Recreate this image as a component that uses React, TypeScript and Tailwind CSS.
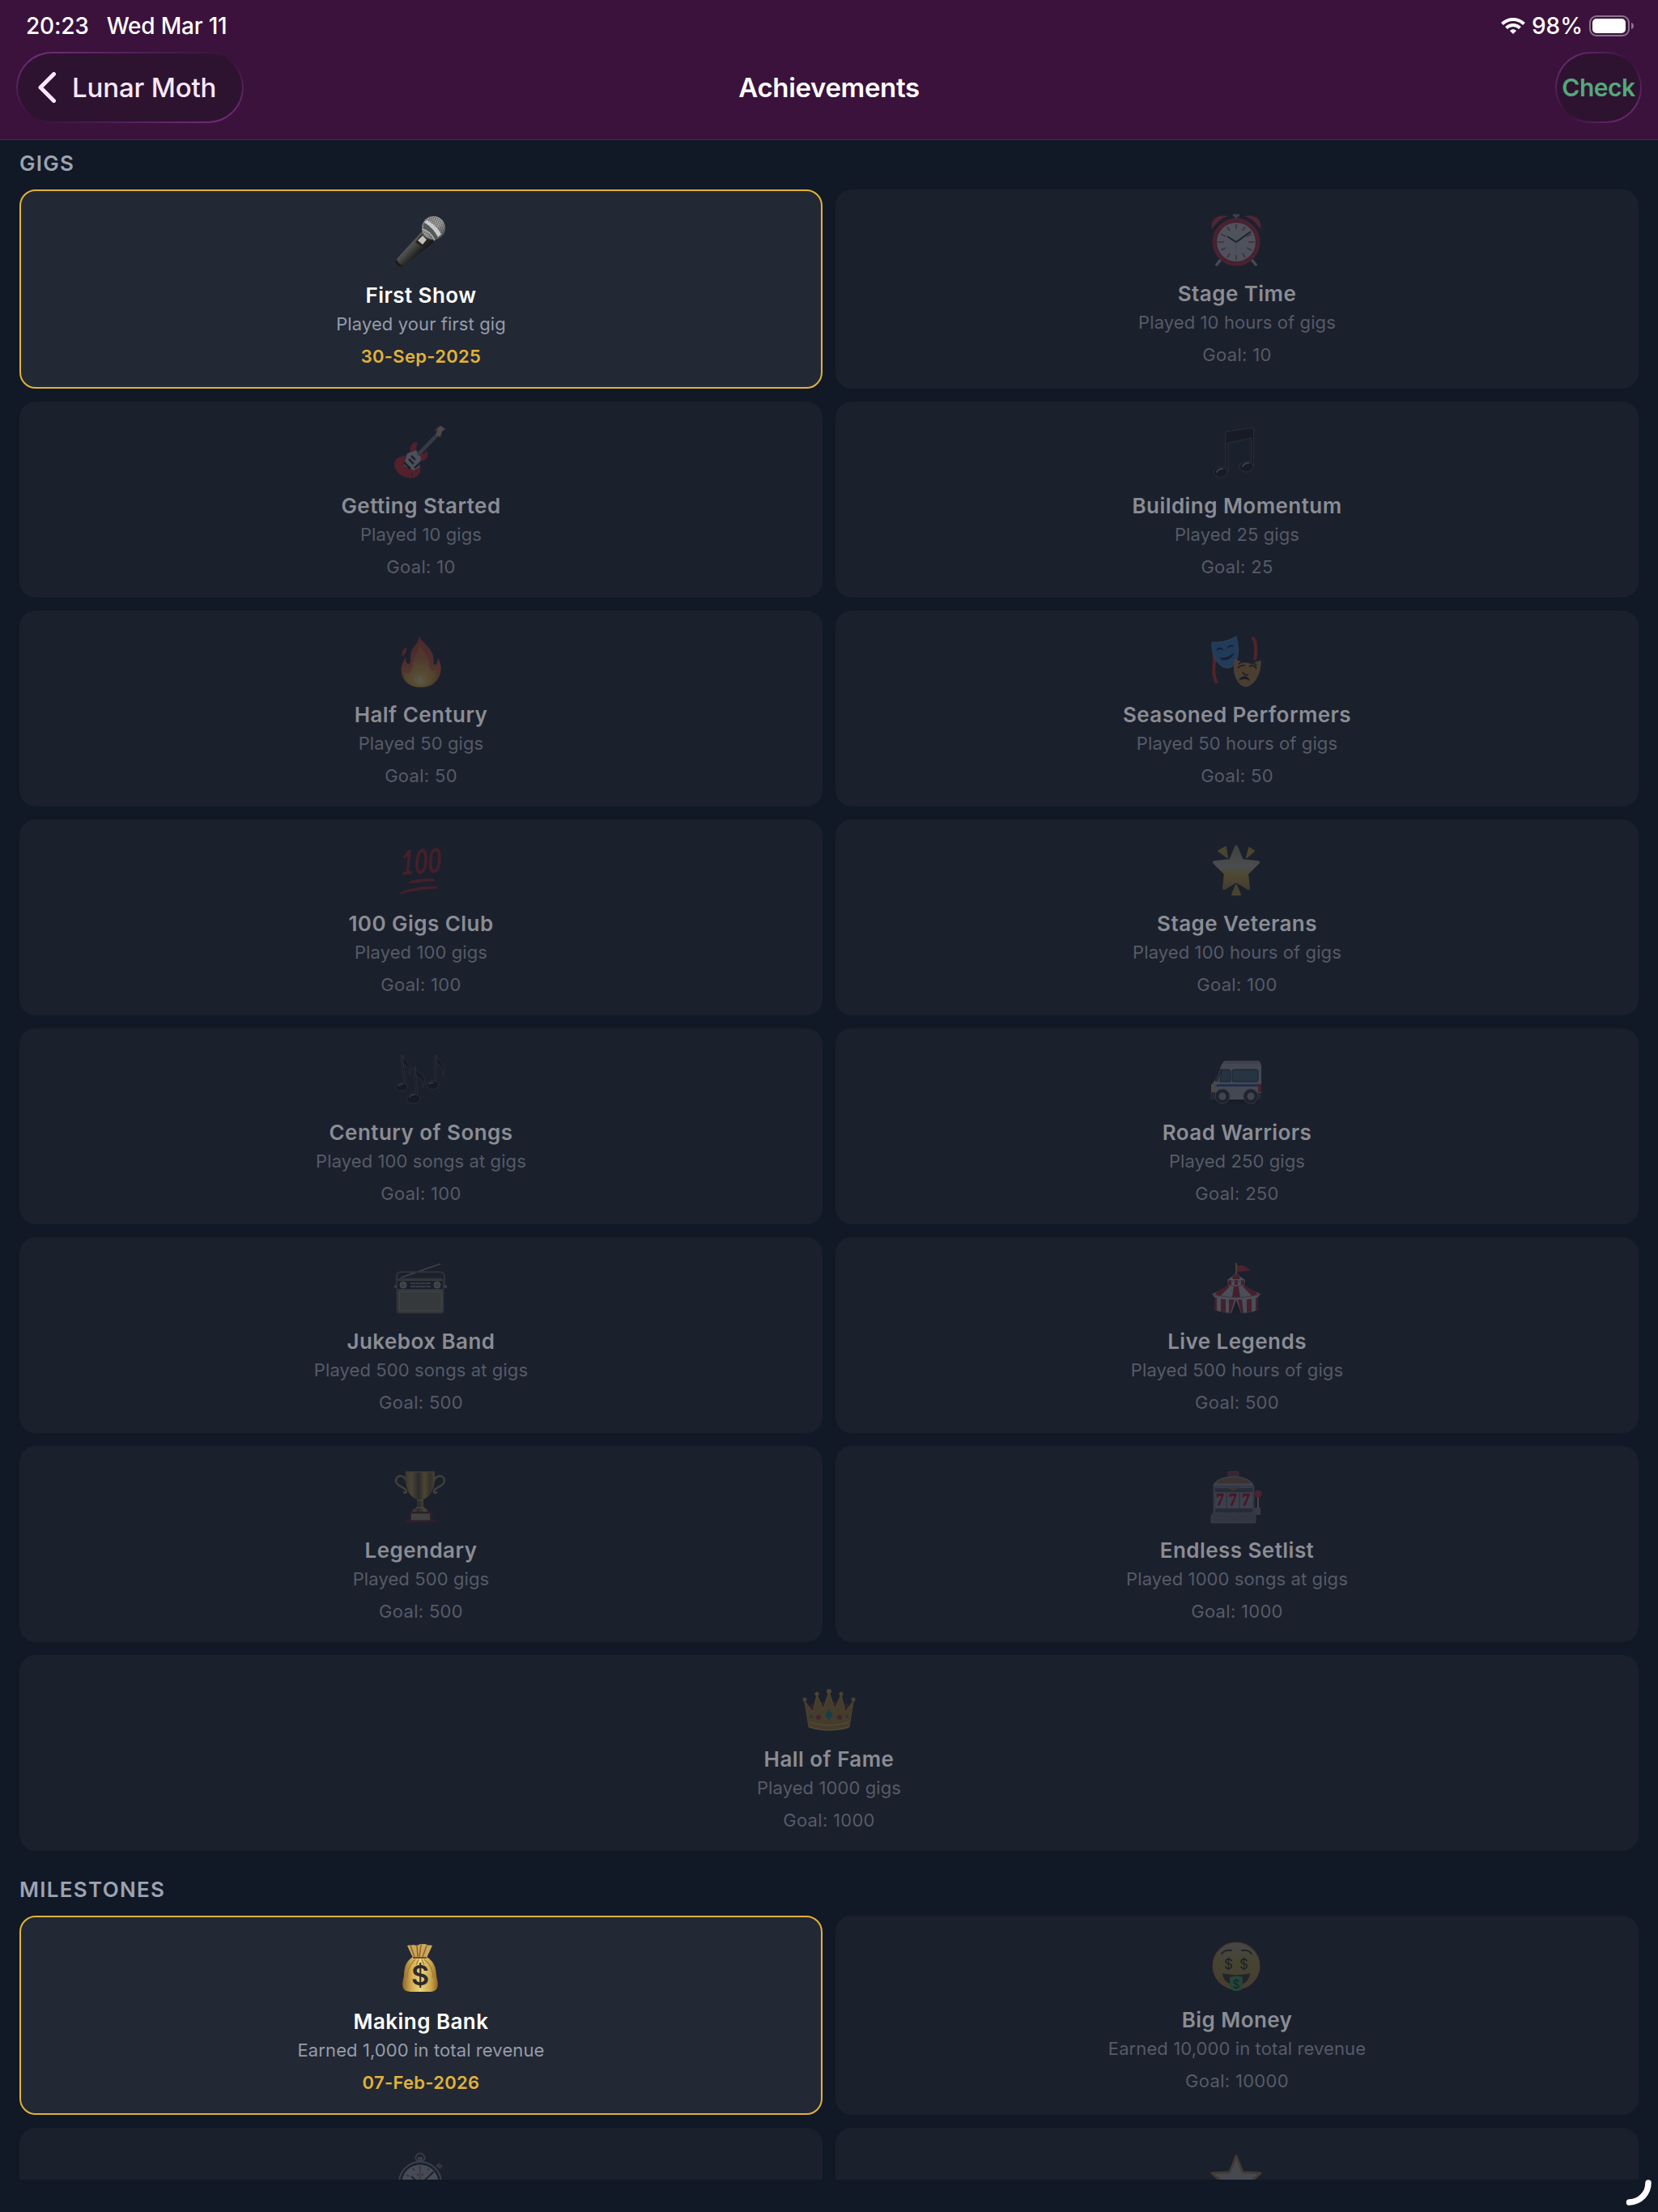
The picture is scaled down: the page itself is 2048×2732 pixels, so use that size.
import type { ReactNode } from 'react';

interface Achievement {
  id: string;
  icon: ReactNode;
  title?: string;
  description?: string;
  goal?: number;
  earnedOn?: string;
  wide?: boolean;
}

interface Section {
  name: string;
  items: Achievement[];
}

const Icon = ({ children }: { children: ReactNode }) => (
  <svg className="w-16 h-16 overflow-visible" viewBox="0 0 64 64" fill="none">
    {children}
  </svg>
);

const Microphone = () => (
  <Icon>
    <defs>
      <linearGradient id="mic-body" x1="15" y1="38" x2="27" y2="50" gradientUnits="userSpaceOnUse">
        <stop stopColor="#5a5a58" />
        <stop offset="0.4" stopColor="#444443" />
        <stop offset="1" stopColor="#1b1b1b" />
      </linearGradient>
      <linearGradient id="mic-head" x1="38" y1="6" x2="58" y2="28" gradientUnits="userSpaceOnUse">
        <stop stopColor="#a5a5a3" />
        <stop offset="0.5" stopColor="#b5b5b3" />
        <stop offset="1" stopColor="#555" />
      </linearGradient>
      <pattern id="mic-mesh" width="2.4" height="2.4" patternUnits="userSpaceOnUse" patternTransform="rotate(20)">
        <path d="M0 0h2.4M0 0v2.4" stroke="#3a3a3a" strokeWidth="0.9" />
      </pattern>
    </defs>
    <path d="M34 19L0 56c0 4 3 7 8 8l40-31z" fill="url(#mic-body)" />
    <path d="M0 56c0 4 3 7 8 8l2-2c-4-1-7-4-8-8z" fill="#1c1c1c" />
    <circle cx="47.500" cy="15.500" r="14.500" fill="url(#mic-head)" />
    <circle cx="47.500" cy="15.500" r="14.500" fill="url(#mic-mesh)" />
    <path d="M36 9c6 3 13 10 17 18l-5 4c-3-6-8-11-14-13z" fill="#55585a" />
    <path d="M39 6c7 3 14 10 18 17l-4 4C49 19 43 12 36 9z" fill="#c9cacd" />
    <path d="M34 17c7 2 12 7 15 14" stroke="#b5b5b5" strokeWidth="1.500" />
    <path d="M33 24l8 7-7 8-9-6z" fill="#202020" />
    <path d="M34 25l5 5-5 6-6-5z" fill="#c5bfc0" />
  </Icon>
);

const AlarmClock = () => (
  <Icon>
    <path d="M14 54l-8 10M48 54l8 10" stroke="#a9adb4" strokeWidth="3.500" />
    <path d="M27 2h8M31 2v5" stroke="#8b8f98" strokeWidth="3" />
    <path d="M1 19C-2 8 8 0 21 3c-8 2-14 8-20 16zM61 19C64 8 54 0 41 3c8 2 14 8 20 16z" fill="#c33444" />
    <circle cx="31" cy="35" r="29.500" fill="#b92639" />
    <circle cx="31" cy="35" r="24.500" fill="#c4c5cb" stroke="#7a2030" />
    <path
      d="M31 13v6M31 51v6M8 35h8M46 35h8M20 16l3 5M42 16l-3 5M12 25l6 3M50 25l-6 3M12 45l6-3M50 45l-6-3M20 54l3-5M42 54l-3-5"
      stroke="#b34353"
      strokeWidth="1.600"
    />
    <path d="M20 28l11 7 18-13" stroke="#23262c" strokeWidth="2" />
    <path d="M31 35v14" stroke="#a2a2a6" />
  </Icon>
);

const Guitar = () => (
  <Icon>
    <path
      d="M27 21c-5-1-8 3-8 8 0 6-4 8-11 9-6 1-10 6-8 13 2 8 10 12 18 13 9 1 13-5 13-12-1-6 1-9 5-10 4-2 5-6 3-11-3 5-6 4-9 3-5-1-5-6-3-12z"
      fill="#d5222c"
      stroke="#9b343c"
    />
    <path d="M15 34l11-4 6 9-2 12-7 4-12-6z" fill="#b9bec8" />
    <path d="M28 36L53 10" stroke="#777b82" strokeWidth="4.500" />
    <path d="M30 34L53 10" stroke="#494d55" strokeWidth="1" strokeDasharray="1 3" />
    <path d="M51 11c0-5 1-9 6-11l5 4-4 3-2 7z" fill="#c7a377" />
    <path d="M49 6l7-6M52 2l4 8" stroke="#9b9b9b" strokeWidth="1" />
    <path d="M11 45l8 8M17 41l6 6M20 37l5 5M33 44l-9 8" stroke="#20232b" strokeWidth="2.500" />
    <circle cx="21" cy="60" r="1.300" fill="#333" />
  </Icon>
);

const MusicNote = () => (
  <Icon>
    <g fill="#0e1118" stroke="#515868" strokeWidth="0.900">
      <path d="M18 7L52.700 2v48h-3V15L21 21v36h-3z" />
      <ellipse cx="11.700" cy="57" rx="8.500" ry="6.500" />
      <ellipse cx="43.500" cy="50.500" rx="8.500" ry="6.500" />
    </g>
    <path d="M7 57c1-3 4-4 7-4M39 50c1-3 4-4 7-4" stroke="#858994" strokeWidth="2" strokeLinecap="round" />
  </Icon>
);

const Fire = () => (
  <Icon>
    <defs>
      <linearGradient id="fire" x1="31" y1="2" x2="31" y2="64" gradientUnits="userSpaceOnUse">
        <stop stopColor="#b83a32" />
        <stop offset="0.5" stopColor="#c3512b" />
        <stop offset="1" stopColor="#d08b2c" />
      </linearGradient>
      <radialGradient id="fire-core" cx="31" cy="56" r="29" gradientUnits="userSpaceOnUse">
        <stop stopColor="#fbf2b0" />
        <stop offset="0.35" stopColor="#e3bb3f" />
        <stop offset="1" stopColor="#c8742e" />
      </radialGradient>
    </defs>
    <path
      d="M29.700 1c1 7 17 14 18 29 0 4-1 6 1 7 3 0 4-5 4-9 6 10 5 20-1 28-5 7-12 9-20 9-14 0-23-8-24-20-1-7 3-13 6-18-1 5 0 9 3 9 4-1 1-7 3-14 2-8 9-10 10-21z"
      fill="url(#fire)"
    />
    <path d="M14 15c1 6-2 8-4 12-3-3-1-9 4-12z" fill="#b83a32" />
    <path
      d="M30 11c2 8 12 12 12 25 0 8 4 10 9 7 0 14-8 21-20 21S11 57 11 46c4 4 9 2 10-6 1-12 8-17 9-29z"
      fill="url(#fire-core)"
      opacity="0.800"
    />
  </Icon>
);

const Masks = () => (
  <Icon>
    <path d="M3 25c4 7-4 20 4 35M51 3c5 6 5 17 3 28" stroke="#d12d22" strokeWidth="4" />
    <path d="M1 9c10 1 20-1 30-7 2 8 4 20 1 28-2 7-7 11-12 11C9 40 0 27 1 9z" fill="#2f7fc4" stroke="#6b8aa8" />
    <path d="M6 20c1-5 6-6 10-1-4-1-7-1-10 1zM19 17c2-5 7-6 10-2-4-1-7 0-10 2zM10 28c8 1 13-1 18-6 0 8-14 13-18 6z" fill="#12203a" />
    <path d="M29 30c10 6 21 7 32 2 1 13-6 30-18 32-11-1-17-17-14-34z" fill="#b8843a" stroke="#a08c6e" />
    <path
      d="M33 41c3-3 6-4 9-3M47 39c4-2 7-1 9 3M34 36c3-2 5-3 8-2M47 35c4-1 7 0 9 3M39 46c1 4 5 4 7 3"
      stroke="#292019"
      strokeWidth="1.800"
    />
    <path d="M34 57c3-8 12-8 14 0-5-3-9-3-14 0z" fill="#1b1713" />
  </Icon>
);

const Hundred = () => (
  <Icon>
    <text
      x="33"
      y="37"
      textAnchor="middle"
      transform="rotate(-4 33 30) skewX(-4) translate(1 0)"
      textLength="51"
      lengthAdjust="spacingAndGlyphs"
      fontSize="42"
      className="font-[Lato,sans-serif] italic font-bold"
      fill="#a81d25"
    >
      100
    </text>
    <path d="M17 48c10-3 21-5 32-3-11 0-21 2-32 3zM7 61c14-5 30-8 45-7-16 1-31 3-45 7z" stroke="#a81d25" strokeWidth="2.500" fill="#a81d25" />
  </Icon>
);

const GlowingStar = () => (
  <Icon>
    <defs>
      <linearGradient id="glow" x1="31" y1="3" x2="31" y2="58" gradientUnits="userSpaceOnUse">
        <stop stopColor="#9a9155" />
        <stop offset="0.45" stopColor="#b5b3a2" />
        <stop offset="0.65" stopColor="#c2a639" />
        <stop offset="1" stopColor="#a07b3a" />
      </linearGradient>
    </defs>
    <path
      d="M31 4l7 17 20 2-14 14 2 18-15-9-15 9 2-18L4 23l20-2z"
      fill="url(#glow)"
      stroke="url(#glow)"
      strokeWidth="4"
      strokeLinejoin="round"
    />
    <path d="M9 9l9-5 2 13zM53 9l-6-4-3 12zM31 51l-5 12h10z" fill="#b39336" stroke="#b39336" strokeWidth="2" strokeLinejoin="round" />
  </Icon>
);

const Notes = () => (
  <Icon>
    <g stroke="#4d5463" strokeWidth="0.900" fill="#0c0f15">
      <path d="M9 3l5 38h-2L7 4zM9 3c3 8 14 12 9 25 0-9-4-13-8-13zM25 18l3 36h-2L23 19zM25 18c2 9 18 10 9 25 2-10-3-12-8-13zM51 3v36h-2V3zM51 3c2 9 15 11 8 25 1-10-3-13-8-14z" />
      <ellipse cx="8" cy="42.500" rx="7.500" ry="5" />
      <ellipse cx="22.500" cy="57" rx="8.500" ry="6" />
      <ellipse cx="46.500" cy="40" rx="7.500" ry="5.500" />
    </g>
    <path d="M4 41c1-1 3-2 5-2M18 55c1-2 4-3 6-3M42 39c1-2 3-2 5-2" stroke="#7e828d" strokeWidth="1.500" strokeLinecap="round" />
  </Icon>
);

const Van = () => (
  <Icon>
    <ellipse cx="31" cy="60" rx="30" ry="3" fill="#10141c" />
    <path d="M20 10h37c3 0 5 3 5 8v40H0V40l4-5 9-20c2-4 4-5 7-5z" fill="#a4a6aa" />
    <path d="M20 10h37l2 4H16z" fill="#898b90" />
    <path d="M13 21h9c1 0 2 1 2 2v13H11zM10 21l-5 14h3l5-14z" fill="#3d6172" stroke="#20252e" />
    <rect x="26" y="21" width="32" height="15" rx="2" fill="#42687b" stroke="#20252e" />
    <path d="M5 42h57v-3H8z" fill="#385186" />
    <path d="M4 40h2l-1 8H3z" fill="#d2a12e" />
    <path d="M58 39h4v10h-4z" fill="#b02531" />
    <path d="M-1 49h6v9h-4c-1 0-2-1-2-2zM57 50h5v8h-5z" fill="#383c43" />
    <g fill="#292d34" stroke="#666a71">
      <circle cx="14" cy="54" r="9" />
      <circle cx="49" cy="54" r="9" />
    </g>
    <g fill="#999ca2">
      <circle cx="14" cy="54" r="4.500" />
      <circle cx="49" cy="54" r="4.500" />
    </g>
  </Icon>
);

const Radio = () => (
  <Icon>
    <path d="M7 20L56 3" stroke="#8d8b82" strokeWidth="1.800" />
    <path d="M2 32V18c0-3 2-5 6-5h46c5 0 7 2 7 5v14" stroke="#5b5c59" strokeWidth="2" />
    <path d="M-1 31h4M60 31h4" stroke="#8c8c90" strokeWidth="3" />
    <rect x="2" y="21" width="58" height="43" rx="3.500" fill="#6f6d5d" stroke="#4f4f48" />
    <path d="M3 24h56v10H3z" fill="#1d2232" />
    <path d="M19 27h25M19 31h25" stroke="#9e9c8c" strokeWidth="1.600" />
    <path d="M25 26v6M31 26v6M38 26v6" stroke="#45474c" />
    <circle cx="10" cy="29" r="4" fill="#8b887c" stroke="#b5b3a8" />
    <circle cx="52" cy="29" r="4" fill="#8b887c" stroke="#b5b3a8" />
    <rect x="5.500" y="37" width="52" height="24" rx="1" fill="#7c7a68" stroke="#989784" />
    <path d="M6 40h51M6 43h51M6 46h51M6 49h51M6 52h51M6 55h51M6 58h51" stroke="#626252" strokeWidth="0.800" />
  </Icon>
);

const Tent = () => (
  <Icon>
    <path d="M31 2v15" stroke="#a89340" strokeWidth="2" />
    <path d="M32 5h8l9 6-8 1-9 1z" fill="#bd2831" />
    <path d="M31 14c4 4 7 6 11 9l-1 7c5 4 12 7 20 10l-3 4v16c-9 3-17 4-27 4s-18-1-27-4V44l-3-4c8-3 15-6 20-10l-1-7c4-3 7-5 11-9z" fill="#b8babf" />
    {/* roof panels */}
    <path
      d="M31 15l-5 4 1 3h8l1-3zM21 23h4v6h-4zM29 23h4v6h-4zM37 23h4v6h-4zM20 30l3 1-12 12-6-2 2-4zM28 31h6l2 13H26zM42 30l-3 1 12 12 6-2-2-4z"
      fill="#a3222d"
    />
    {/* wall stripes */}
    <path d="M4 44l3 1v16l-3-1zM12 46l6 1v16l-6-1zM24 47h5L24 64h-2V47zM33 47h5l2 17h-3zM44 47l6-1v16l-6 1zM55 45l3-1v16l-3 1z" fill="#a3222d" />
    <path d="M31 47l-6 17h12z" fill="#171b25" />
    <path d="M20 23c7 2 15 2 22 0M21 29c7 2 14 2 20 0M1 40c18 6 42 6 60 0" stroke="#9a6167" strokeWidth="1" />
  </Icon>
);

const Trophy = () => (
  <Icon>
    <defs>
      <linearGradient id="trophy" x1="13" y1="0" x2="49" y2="0" gradientUnits="userSpaceOnUse">
        <stop stopColor="#857035" />
        <stop offset="0.2" stopColor="#b8994a" />
        <stop offset="0.45" stopColor="#4d442f" />
        <stop offset="0.65" stopColor="#bd9a43" />
        <stop offset="0.85" stopColor="#6e572c" />
        <stop offset="1" stopColor="#ab8e4b" />
      </linearGradient>
    </defs>
    <path
      d="M14 13C10 4 1 6 1 13c0 7 13 8 13 13 0 2-2 2-3 1M48 13c4-9 13-7 13 0 0 7-13 8-13 13 0 2 2 2 3 1"
      stroke="#a08956"
      strokeWidth="2.500"
      strokeLinecap="round"
    />
    <path d="M13 2h36c1 16-2 29-14 34v8c0 3 5 3 6 7H21c1-4 6-4 6-7v-8C15 31 12 18 13 2z" fill="url(#trophy)" />
    <path d="M13 2h36" stroke="#9c8448" strokeWidth="1.500" />
    <path d="M27 37h8M26 46h10" stroke="#a9914f" strokeWidth="1.500" />
    <path d="M18 51h28v11H18zM13 61h38v3.500H12z" fill="#581f2b" />
    <path d="M20 53.500h23v8H20z" fill="#99906a" />
  </Icon>
);

const SlotMachine = () => (
  <Icon>
    <rect x="21" y="1.500" width="13" height="6" rx="1.500" fill="#8a323d" stroke="#5f6168" />
    <path d="M2 20C6 3 49 3 53 20z" fill="#8b8f98" />
    <path d="M6 16c7-10 37-10 43 0z" fill="#8a5843" />
    <rect x="2.500" y="19" width="51" height="37" rx="2" fill="#6d717b" />
    <path d="M0 56l3-4h49l3 4v8c0 1-1 1-2 1H1c-1 0-1 0-1-1z" fill="#676b76" stroke="#8c8f98" strokeWidth="0.700" />
    <rect x="5" y="21" width="46" height="31" rx="3" fill="#878b93" />
    <path d="M5 22h46v5H5zM5 47h46v5H5z" fill="#414650" />
    <path d="M19 20v33M35 20v33" stroke="#42464f" />
    <path d="M21 22h12M24 24h6" stroke="#8a7140" strokeWidth="1.500" />
    <g fontSize="20" textAnchor="middle" fill="#b5001c" stroke="#b5001c" strokeWidth="0.800" className="font-['Liberation_Serif',serif] font-bold">
      <text x="11" y="43">7</text>
      <text x="27" y="43">7</text>
      <text x="43" y="43">7</text>
    </g>
    <path d="M58 30v20" stroke="#9a9da6" strokeWidth="2" />
    <path d="M54 46h7v9h-8z" fill="#777b85" />
    <circle cx="58" cy="29" r="4.500" fill="#b62a39" />
  </Icon>
);

const Crown = () => (
  <Icon>
    <path d="M7 32c10-6 40-6 50 0v22H7z" fill="#632a31" />
    <path
      d="M2 27l10 14 5-22 8 18 7-22 7 22 8-18 5 22 10-14-5 32c-14 5-36 5-50 0z"
      fill="#a77e2c"
      stroke="#b8913a"
      strokeWidth="1.200"
      strokeLinejoin="round"
    />
    <path d="M8 53c15 5 33 5 48 0M8 59c15 5 33 5 48 0" stroke="#d0a947" strokeWidth="1.500" />
    <g fill="#b9954a">
      <circle cx="2" cy="25" r="2.500" />
      <circle cx="17" cy="18" r="2.500" />
      <circle cx="32" cy="15" r="3" />
      <circle cx="47" cy="18" r="2.500" />
      <circle cx="62" cy="25" r="2.500" />
    </g>
    <path d="M32 37l5 7-5 7-5-7z" fill="#187f8c" />
    <circle cx="19" cy="47" r="3" fill="#a42c3c" />
    <circle cx="45" cy="47" r="3" fill="#a42c3c" />
    <circle cx="10" cy="46" r="2" fill="#18818a" />
    <circle cx="54" cy="46" r="2" fill="#18818a" />
  </Icon>
);

const MoneyBag = () => (
  <Icon>
    <defs>
      <linearGradient id="bag" x1="9" y1="0" x2="53" y2="0" gradientUnits="userSpaceOnUse">
        <stop stopColor="#8b6528" />
        <stop offset="0.25" stopColor="#d0ab50" />
        <stop offset="0.5" stopColor="#ecd57c" />
        <stop offset="0.8" stopColor="#cba74d" />
        <stop offset="1" stopColor="#8f6425" />
      </linearGradient>
    </defs>
    <path d="M15 5c3-1 5 0 8-1 3 1 5 1 8-1 3 1 6-1 8 1 2 1 5 0 7 1l-7 15H22z" fill="#cba75b" />
    <path d="M19 5l5 14M27 5l1 14M39 5l-5 14M32 4l-2 15" stroke="#8b622a" strokeWidth="1.500" />
    <path d="M22 19h17c9 5 12 14 12 23 1 5 3 11 1 15-2 6-9 5-21 5S12 63 10 57c-2-4 0-10 1-15 0-9 2-18 11-23z" fill="url(#bag)" />
    <path d="M22 20h17" stroke="#795123" strokeWidth="2" />
    <path d="M25 22c-7 6-10 14-10 23M36 22c8 6 11 14 11 23M29 22l-3 7M33 22l3 7" stroke="#a47c34" strokeWidth="1.300" />
    <text x="31" y="54" textAnchor="middle" fontSize="34" fill="#302a2b" className="font-[Inter,sans-serif] font-semibold">
      $
    </text>
  </Icon>
);

const MoneyFace = () => (
  <Icon>
    <defs>
      <linearGradient id="face" x1="31" y1="2" x2="31" y2="60" gradientUnits="userSpaceOnUse">
        <stop stopColor="#aaa294" />
        <stop offset="0.4" stopColor="#a8993d" />
        <stop offset="1" stopColor="#ab7f3a" />
      </linearGradient>
    </defs>
    <circle cx="31" cy="32" r="28.700" fill="url(#face)" stroke="#b87f40" strokeWidth="1.500" />
    <path d="M13 17c3-4 7-5 12-4M38 13c5-1 9 0 12 4" stroke="#3c2a20" strokeWidth="2" strokeLinecap="round" />
    <path d="M14 41c11 3 23 3 34 0-1 9-7 15-17 15s-16-6-17-15z" fill="#3b2826" />
    <path d="M23 46c5-2 11-2 16 0v11c0 4-3 6-8 6s-8-2-8-6z" fill="#33a355" />
    <g textAnchor="middle" fill="#201e18" className="font-[Inter,sans-serif]">
      <text x="21.500" y="36" fontSize="17">$</text>
      <text x="40.500" y="36" fontSize="17">$</text>
      <text x="31" y="60" fontSize="14">$</text>
    </g>
  </Icon>
);

const Stopwatch = () => (
  <Icon>
    <circle cx="31" cy="7" r="5.500" stroke="#747983" strokeWidth="2" />
    <path d="M28 6h6v6h-6z" fill="#7b808b" />
    <path d="M50 17l4-4 5 5-4 3z" fill="#626772" />
    <circle cx="31" cy="38" r="26" fill="#1d2430" stroke="#848b98" strokeWidth="2" />
    <circle cx="31" cy="38" r="22.500" fill="#adaeb3" />
    <path d="M31 17v21" stroke="#a75c53" strokeWidth="1.500" />
    <path d="M31 40l17-16M31 40L20 30" stroke="#252a33" strokeWidth="2" />
    <path d="M22 20l2 3M42 20l-2 3M14 28l3 2M27 27l2 2M35 27l-2 2" stroke="#4a4e57" strokeWidth="1.300" />
  </Icon>
);

const Star = () => (
  <Icon>
    <path
      d="M31 5l8 20 22 1-17 15 6 21-19-12-19 12 6-21L1 26l22-1z"
      fill="#aaaca2"
      stroke="#a27b43"
      strokeWidth="3"
      strokeLinejoin="round"
    />
  </Icon>
);

const sections: Section[] = [
  {
    name: 'Gigs',
    items: [
      { id: 'first-show', icon: <Microphone />, title: 'First Show', description: 'Played your first gig', earnedOn: '30-Sep-2025' },
      { id: 'stage-time', icon: <AlarmClock />, title: 'Stage Time', description: 'Played 10 hours of gigs', goal: 10 },
      { id: 'gigs-10', icon: <Guitar />, title: 'Getting Started', description: 'Played 10 gigs', goal: 10 },
      { id: 'gigs-25', icon: <MusicNote />, title: 'Building Momentum', description: 'Played 25 gigs', goal: 25 },
      { id: 'gigs-50', icon: <Fire />, title: 'Half Century', description: 'Played 50 gigs', goal: 50 },
      { id: 'hours-50', icon: <Masks />, title: 'Seasoned Performers', description: 'Played 50 hours of gigs', goal: 50 },
      { id: 'gigs-100', icon: <Hundred />, title: '100 Gigs Club', description: 'Played 100 gigs', goal: 100 },
      { id: 'hours-100', icon: <GlowingStar />, title: 'Stage Veterans', description: 'Played 100 hours of gigs', goal: 100 },
      { id: 'songs-100', icon: <Notes />, title: 'Century of Songs', description: 'Played 100 songs at gigs', goal: 100 },
      { id: 'gigs-250', icon: <Van />, title: 'Road Warriors', description: 'Played 250 gigs', goal: 250 },
      { id: 'songs-500', icon: <Radio />, title: 'Jukebox Band', description: 'Played 500 songs at gigs', goal: 500 },
      { id: 'hours-500', icon: <Tent />, title: 'Live Legends', description: 'Played 500 hours of gigs', goal: 500 },
      { id: 'gigs-500', icon: <Trophy />, title: 'Legendary', description: 'Played 500 gigs', goal: 500 },
      { id: 'songs-1000', icon: <SlotMachine />, title: 'Endless Setlist', description: 'Played 1000 songs at gigs', goal: 1000 },
      { id: 'gigs-1000', icon: <Crown />, title: 'Hall of Fame', description: 'Played 1000 gigs', goal: 1000, wide: true },
    ],
  },
  {
    name: 'Milestones',
    items: [
      { id: 'revenue-1000', icon: <MoneyBag />, title: 'Making Bank', description: 'Earned 1,000 in total revenue', earnedOn: '07-Feb-2026' },
      { id: 'revenue-10000', icon: <MoneyFace />, title: 'Big Money', description: 'Earned 10,000 in total revenue', goal: 10000 },
      { id: 'practice', icon: <Stopwatch /> },
      { id: 'rating', icon: <Star /> },
    ],
  },
];

function AchievementCard({ item }: { item: Achievement }) {
  const earned = Boolean(item.earnedOn);

  return (
    <div
      className={`flex flex-col items-center min-h-[242px] rounded-[20px] pt-[30px] ${
        earned ? 'bg-[#222834] border-2 border-[#e0b23a] h-[246px]' : 'bg-[#1b202d]'
      } ${item.wide ? 'col-span-2' : ''}`}
    >
      <div className={earned ? 'h-16' : 'h-16 opacity-30'}>{item.icon}</div>
      <div className={`mt-[19px] text-[26px] leading-8 font-semibold tracking-[0.45px] ${earned ? 'text-white' : 'text-[#8a8d93]'}`}>
        {item.title}
      </div>
      <div className={`mt-[5px] text-[22px] leading-7 tracking-[0.1px] ${earned ? 'text-[#969ca9]' : 'text-[#555b67]'}`}>
        {item.description}
      </div>
      {earned ? (
        <div className="mt-3 text-[22px] leading-7 font-semibold tracking-[0.3px] text-[#e0b23a]">{item.earnedOn}</div>
      ) : (
        item.goal && <div className="mt-3 text-[22px] leading-7 tracking-[0.3px] text-[#555b67]">Goal: {item.goal}</div>
      )}
    </div>
  );
}

function StatusBar() {
  return (
    <div className="flex items-center justify-between h-16 pl-8 pr-[30px] text-[28px] font-medium text-white">
      <div className="flex gap-[22px]">
        <span className="tracking-[-0.2px]">20:23</span>
        <span className="tracking-[-0.2px]">Wed Mar 11</span>
      </div>
      <div className="flex items-center gap-2">
        <svg className="w-[30px] h-5" viewBox="0 0 30 20" fill="none">
          <path d="M1.500 7.500C9.500 0 20.500 0 28.500 7.500" stroke="white" strokeWidth="4" />
          <path d="M6.500 12.500c5-4.600 12-4.600 17 0" stroke="white" strokeWidth="4" />
          <path d="M15 20l-4-4c2.200-2.200 5.800-2.200 8 0z" fill="white" />
        </svg>
        <span>98%</span>
        <svg className="w-[55px] h-[26px]" viewBox="0 0 55 26" fill="none">
          <rect x="1" y="1" width="48" height="24" rx="8" stroke="#8d748e" strokeWidth="2" />
          <rect x="4" y="4" width="41" height="18" rx="5" fill="white" />
          <path d="M52 9c4 1 4 7 0 8z" fill="#8d748e" />
        </svg>
      </div>
    </div>
  );
}

export default function App() {
  return (
    <div className="relative flex flex-col w-[2048px] h-[2732px] overflow-hidden bg-[#111826] font-[Inter,sans-serif]">
      <header className="h-[173px] shrink-0 bg-[#3a123c] border-b border-[#383047]">
        <StatusBar />
        <nav className="grid grid-cols-[1fr_auto_1fr] items-center h-[88px] px-5">
          <div className="w-[281px] h-[88px] rounded-full p-0.5 bg-linear-to-br from-[#7a2f82] via-[#351237] to-[#7a2f82]">
            <button className="flex items-center w-full h-full rounded-full bg-[#2d1330] pl-[25px] gap-5 text-[33px] tracking-[-0.15px] font-medium text-[#fbe8fd]">
              <svg className="w-[22px] h-[38px]" viewBox="0 0 22 38" fill="none">
                <path d="M19.500 2.500L3 19l16.500 16.500" stroke="currentColor" strokeWidth="5" strokeLinecap="round" strokeLinejoin="round" />
              </svg>
              <span className="pt-0.5">Lunar Moth</span>
            </button>
          </div>
          <h1 className="pt-0.5 text-[33px] tracking-[-0.35px] font-semibold text-white">Achievements</h1>
          <div className="justify-self-end w-[107px] h-[88px] rounded-full p-0.5 bg-linear-to-br from-[#7a2f82] via-[#351237] to-[#7a2f82]">
            <button className="flex items-center justify-center w-full h-full rounded-full bg-[#2d1330] text-[30px] tracking-[-0.5px] font-semibold text-[#54a87c]">
              Check
            </button>
          </div>
        </nav>
      </header>

      <main className="flex-1 min-h-0 mb-10 px-6 overflow-hidden">
        {sections.map((section, i) => (
          <section key={section.name}>
            <h2
              className={`h-8 mb-4 text-[26px] leading-8 font-semibold tracking-[1.3px] uppercase text-[#9ca3af] ${
                i === 0 ? 'mt-[13px]' : 'mt-8'
              }`}
            >
              {section.name}
            </h2>
            <div className="grid grid-cols-2 gap-4">
              {section.items.map((item) => (
                <AchievementCard key={item.id} item={item} />
              ))}
            </div>
          </section>
        ))}
      </main>

      {/* corner swipe handle */}
      <svg className="absolute right-2 bottom-2 w-8 h-8" viewBox="0 0 32 32" fill="none">
        <path d="M28 4C28 17 18 27.500 4.500 28" stroke="white" strokeWidth="7.500" strokeLinecap="round" />
      </svg>
    </div>
  );
}
